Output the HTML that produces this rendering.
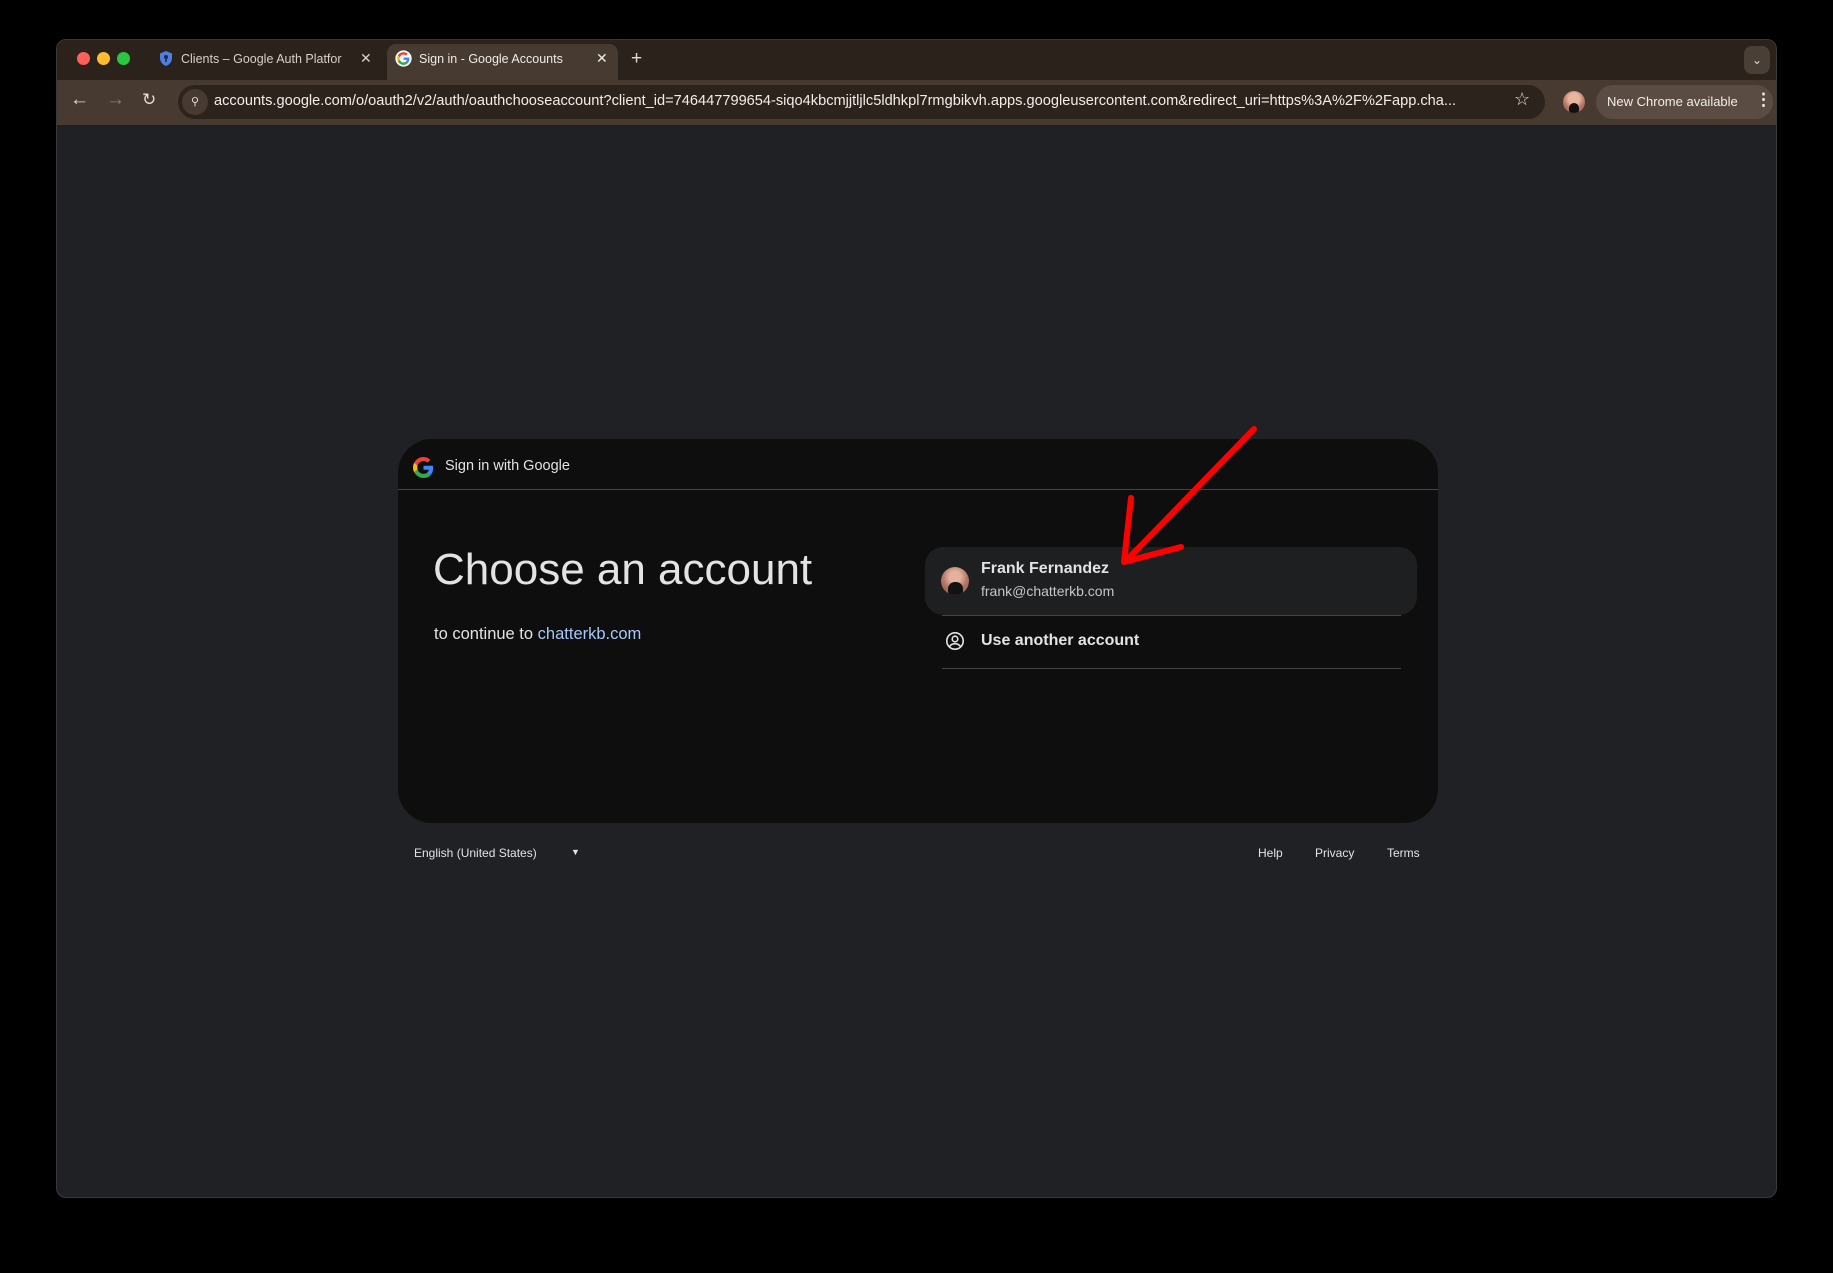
<!DOCTYPE html>
<html><head><meta charset="utf-8"><style>
*{margin:0;padding:0;box-sizing:border-box}
body{width:1833px;height:1273px;background:#000;position:relative;overflow:hidden;font-family:"Liberation Sans",sans-serif;color:#e3e3e3}
.a{position:absolute;white-space:nowrap}
#win{position:absolute;left:56px;top:39px;width:1721px;height:1159px;border-radius:10px;background:#202124;overflow:hidden;border:1px solid #3a3a3a}
#tabs{position:absolute;left:0;top:0;width:100%;height:40px;background:#2b221c}
#tool{position:absolute;left:0;top:40px;width:100%;height:45px;background:#463a31}
.dot{position:absolute;top:12px;width:13px;height:13px;border-radius:50%}
</style></head><body>
<div id="win">
 <div id="tabs">
  <div class="dot" style="left:20px;background:#fe5f57"></div>
  <div class="dot" style="left:40px;background:#febc2e"></div>
  <div class="dot" style="left:60px;background:#28c840"></div>
  <svg class="a" style="left:102px;top:10px" width="14" height="17" viewBox="0 0 14 17"><path d="M7 1L1 3.5V8c0 4 3 7 6 8 3-1 6-4 6-8V3.5z" fill="#4f7fe0"/><circle cx="7" cy="7" r="2" fill="#1d2a55"/><rect x="6.2" y="8" width="1.6" height="4" fill="#1d2a55"/></svg>
  <div class="a" style="left:124px;top:12px;font-size:12.5px;color:#d8d0ca">Clients – Google Auth Platfor</div>
  <div class="a" style="left:303px;top:10px;font-size:14px;color:#d8d0ca">✕</div>
  <div class="a" style="left:330px;top:4px;width:231px;height:36px;background:#463a31;border-radius:9px 9px 0 0"></div>
  <svg class="a" style="left:338px;top:10px" width="17" height="17" viewBox="0 0 48 48"><circle cx="24" cy="24" r="23" fill="#fff"/><g transform="translate(6 6) scale(.75)"><path fill="#EA4335" d="M24 9.5c3.5 0 6.6 1.2 9.1 3.6l6.8-6.8C35.8 2.4 30.3 0 24 0 14.6 0 6.6 5.4 2.6 13.2l7.9 6.2C12.4 13.7 17.7 9.5 24 9.5z"/><path fill="#4285F4" d="M46.1 24.5c0-1.6-.1-3.1-.4-4.5H24v9h12.4c-.5 2.9-2.2 5.3-4.6 6.9l7.7 6c4.5-4.1 6.6-10.2 6.6-17.4z"/><path fill="#FBBC05" d="M10.5 28.6c-.5-1.4-.8-3-.8-4.6s.3-3.2.8-4.6l-7.9-6.2C.9 16.5 0 20.1 0 24s.9 7.5 2.6 10.8l7.9-6.2z"/><path fill="#34A853" d="M24 48c6.5 0 11.9-2.1 15.9-5.8l-7.7-6c-2.1 1.4-4.9 2.3-8.2 2.3-6.3 0-11.6-4.2-13.5-10l-7.9 6.2C6.6 42.6 14.6 48 24 48z"/></g></svg>
  <div class="a" style="left:362px;top:12px;font-size:12.5px;color:#f0ebe6">Sign in - Google Accounts</div>
  <div class="a" style="left:539px;top:10px;font-size:14px;color:#f0ebe6">✕</div>
  <div class="a" style="left:574px;top:8px;font-size:19px;color:#e0d8d2">+</div>
  <div class="a" style="left:1687px;top:6px;width:26px;height:28px;background:#4a3f37;border-radius:8px;color:#ddd;font-size:12px;text-align:center;line-height:28px">⌄</div>
 </div>
 <div id="tool">
  <div class="a" style="left:13px;top:9px;font-size:19px;color:#e5ddd6">←</div>
  <div class="a" style="left:49px;top:9px;font-size:19px;color:#8a7e75">→</div>
  <div class="a" style="left:85px;top:10px;font-size:17px;color:#e5ddd6">↻</div>
  <div class="a" style="left:121px;top:5px;width:1367px;height:34px;background:#2c231d;border-radius:17px"></div>
  <div class="a" style="left:125px;top:9px;width:26px;height:26px;background:#463a31;border-radius:50%;font-size:11px;color:#ddd;text-align:center;line-height:26px">⚲</div>
  <div class="a" style="left:157px;top:13px;font-size:14.6px;color:#f2ede8;width:1340px;overflow:hidden">accounts.google.com/o/oauth2/v2/auth/oauthchooseaccount?client_id=746447799654-siqo4kbcmjjtljlc5ldhkpl7rmgbikvh.apps.googleusercontent.com&amp;redirect_uri=https%3A%2F%2Fapp.cha...</div>
  <div class="a" style="left:1457px;top:9px;font-size:18px;color:#e5ddd6">☆</div>
  <div class="a" style="left:1506px;top:11px;width:22px;height:22px;border-radius:50%;background:radial-gradient(circle at 50% 35%,#e9b4a0 30%,#b07060 60%);overflow:hidden"><div style="position:absolute;left:6px;top:12px;width:10px;height:12px;background:#111;border-radius:5px"></div></div>
  <div class="a" style="left:1539px;top:5px;width:177px;height:34px;background:#5a4c42;border-radius:17px"></div>
  <div class="a" style="left:1550px;top:14px;font-size:13px;color:#f2ede8">New Chrome available</div>
  <div class="a" style="left:1698px;top:10px;font-size:17px;color:#f2ede8;font-weight:bold">⋮</div>
 </div>
 <!-- card -->
 <div class="a" style="left:341px;top:399px;width:1040px;height:384px;background:#0e0e0e;border-radius:34px;overflow:hidden">
  <svg class="a" style="left:15px;top:18px" width="21" height="21" viewBox="0 0 48 48"><path fill="#EA4335" d="M24 9.5c3.5 0 6.6 1.2 9.1 3.6l6.8-6.8C35.8 2.4 30.3 0 24 0 14.6 0 6.6 5.4 2.6 13.2l7.9 6.2C12.4 13.7 17.7 9.5 24 9.5z"/><path fill="#4285F4" d="M46.1 24.5c0-1.6-.1-3.1-.4-4.5H24v9h12.4c-.5 2.9-2.2 5.3-4.6 6.9l7.7 6c4.5-4.1 6.6-10.2 6.6-17.4z"/><path fill="#FBBC05" d="M10.5 28.6c-.5-1.4-.8-3-.8-4.6s.3-3.2.8-4.6l-7.9-6.2C.9 16.5 0 20.1 0 24s.9 7.5 2.6 10.8l7.9-6.2z"/><path fill="#34A853" d="M24 48c6.5 0 11.9-2.1 15.9-5.8l-7.7-6c-2.1 1.4-4.9 2.3-8.2 2.3-6.3 0-11.6-4.2-13.5-10l-7.9 6.2C6.6 42.6 14.6 48 24 48z"/></svg>
  <div class="a" style="left:47px;top:19px;font-size:14.5px;color:#e3e3e3">Sign in with Google</div>
  <div class="a" style="left:0;top:50px;width:100%;height:1px;background:#444"></div>
  <div class="a" style="left:35px;top:106px;font-size:44px;color:#e3e3e3">Choose an account</div>
  <div class="a" style="left:36px;top:186px;font-size:16.5px;color:#e3e3e3">to continue to <span style="color:#a8c7fa">chatterkb.com</span></div>
  <div class="a" style="left:527px;top:108px;width:492px;height:68px;background:#1e1f20;border-radius:18px"></div>
  <div class="a" style="left:543px;top:128px;width:28px;height:28px;border-radius:50%;overflow:hidden;background:radial-gradient(circle at 50% 35%,#e3b19e 25%,#b07462 55%,#8a5747)"><div style="position:absolute;left:7px;top:15px;width:15px;height:16px;background:#121212;border-radius:7px"></div></div>
  <div class="a" style="left:583px;top:121px;font-size:16px;color:#e3e3e3;font-weight:bold">Frank Fernandez</div>
  <div class="a" style="left:583px;top:144px;font-size:14px;color:#c4c7c5">frank@chatterkb.com</div>
  <div class="a" style="left:544px;top:176px;width:459px;height:1px;background:#444"></div>
  <svg class="a" style="left:547px;top:192px" width="20" height="20" viewBox="0 0 20 20" fill="none" stroke="#e3e3e3" stroke-width="1.6"><circle cx="10" cy="10" r="8.2"/><circle cx="10" cy="8" r="2.8"/><path d="M4.5 15.5c1.5-2 3.5-2.8 5.5-2.8s4 .8 5.5 2.8"/></svg>
  <div class="a" style="left:583px;top:193px;font-size:16px;color:#e3e3e3;font-weight:bold">Use another account</div>
  <div class="a" style="left:544px;top:229px;width:459px;height:1px;background:#444"></div>
 </div>
 <div class="a" style="left:357px;top:806px;font-size:12px;color:#e3e3e3">English (United States)</div>
 <div class="a" style="left:514px;top:807px;font-size:9px;color:#e3e3e3">▼</div>
 <div class="a" style="left:1201px;top:806px;font-size:12px;color:#e3e3e3">Help</div>
 <div class="a" style="left:1258px;top:806px;font-size:12px;color:#e3e3e3">Privacy</div>
 <div class="a" style="left:1330px;top:806px;font-size:12px;color:#e3e3e3">Terms</div>
 <svg class="a" style="left:0;top:0" width="1721" height="1159"><g stroke="#ff0000" stroke-width="6" stroke-linecap="round" stroke-linejoin="round" fill="none"><path d="M1197 389L1069 521"/><path d="M1074 458L1067 522L1124 507"/></g></svg>
</div>
</body></html>
